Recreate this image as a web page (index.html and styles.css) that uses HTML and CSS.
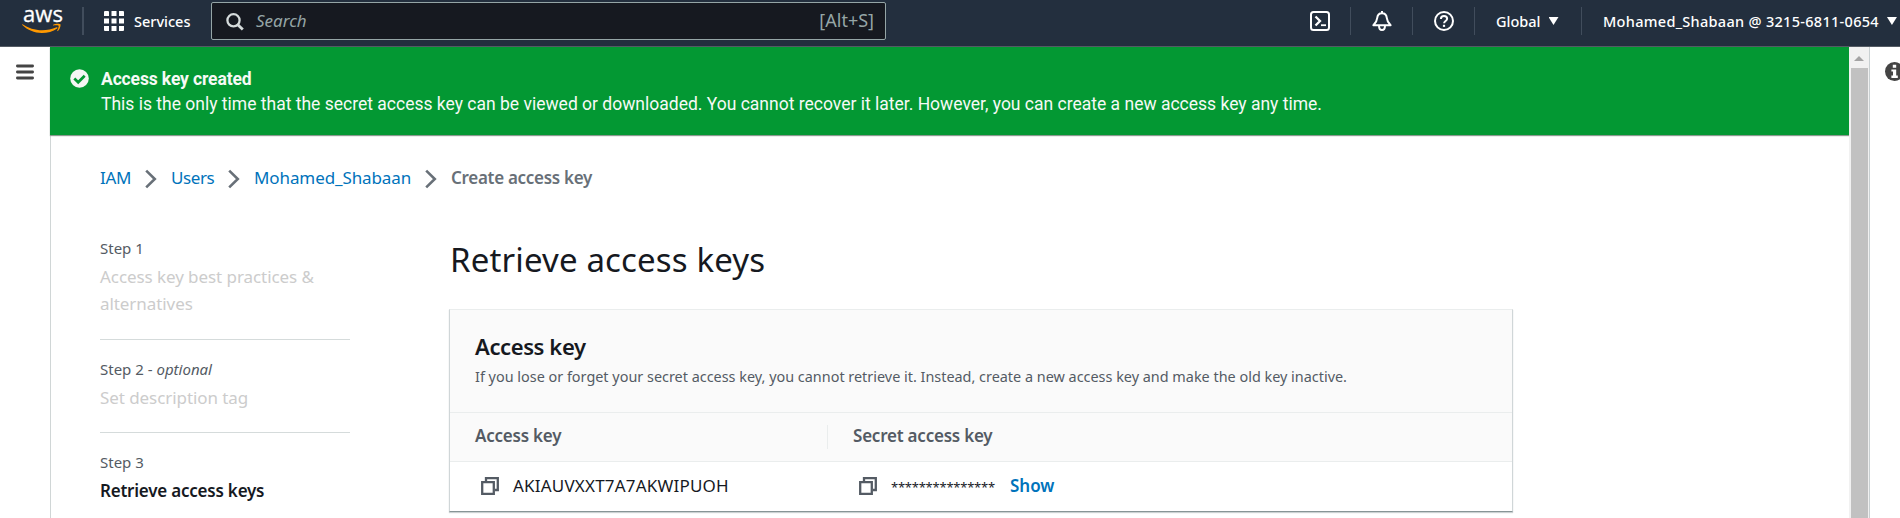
FILE: index.html
```html
<!DOCTYPE html>
<html lang="en">
<head>
<meta charset="utf-8">
<title>Create access key | IAM</title>
<link rel="stylesheet" href="styles.css">
</head>
<body>
<header class="topnav">
  <div class="brand">
    <span class="brand-text">aws</span>
    <svg class="brand-smile" width="40" height="11" viewBox="0 0 40 11"><path d="M.6 1.2C6 5 13 7.2 20 7.2c5.200 0 10-1.100 14.600-3 .8-.3 1.400.6.600 1.200C31 8.500 25.500 10 19.800 10 12.400 10 5.600 7.200.3 2.100c-.4-.5-.1-1.200.3-.9z" fill="#ff9900"/><path d="M36.600 2.800c-.8-.9-4-.6-5.300-.4-.4 0-.5-.3-.1-.6 2.600-1.600 6.600-1.200 7.200-.6.500.6-.1 4.800-2.600 6.800-.4.300-.7.100-.6-.3.600-1.400 1.900-4.100 1.400-4.900z" fill="#ff9900"/></svg>
  </div>
  <div class="rule rule-first"></div>
  <div class="services">
    <svg width="20" height="20" viewBox="0 0 20 20" fill="#fff"><path d="M0 1a1 1 0 0 1 1-1h3a1 1 0 0 1 1 1v4H0zM7.500 0h5v5h-5zM15 0h4a1 1 0 0 1 1 1v4h-5zM0 7.500h5v5H0zM7.500 7.500h5v5h-5zM15 7.500h5v5h-5zM0 15h5v5H1a1 1 0 0 1-1-1zM7.500 15h5v5h-5zM15 15h5v4a1 1 0 0 1-1 1h-4z"/></svg>
    <span class="nav-text">Services</span>
  </div>
  <div class="search">
    <svg width="18" height="18" viewBox="0 0 18 18" fill="none" stroke="#d5dbdb"><circle cx="7.500" cy="7.300" r="6.100" stroke-width="2.300"/><path d="M11.800 11.700l5 4.900" stroke-width="2.800"/></svg>
    <span class="search-hint">Search</span>
    <span class="search-key">[Alt+S]</span>
  </div>
  <div class="tools">
    <svg class="tool" width="20" height="20" viewBox="0 0 20 20" fill="none" stroke="#fff" stroke-width="2"><rect x="1" y="1" width="18" height="18" rx="2.500"/><path d="M5.500 5.500L10 10l-4.500 4.500" stroke-width="2.300"/><path d="M11 14.200h5" stroke-width="1.800"/></svg>
    <div class="rule"></div>
    <svg class="tool" width="20" height="20" viewBox="0 0 20 20" fill="none" stroke="#fff" stroke-width="2" stroke-linejoin="round"><path d="M10 2.200c-3.200 0-4.600 2.300-4.800 4.800-.2 3-1.200 4.600-3.800 7.200h17.200c-2.600-2.600-3.600-4.200-3.800-7.200-.2-2.500-1.600-4.800-4.800-4.800zM10 0v2.500"/><path d="M7 14.500c0 2.700 1.200 4.500 3 4.500s3-1.800 3-4.500"/></svg>
    <div class="rule"></div>
    <svg class="tool" width="20" height="20" viewBox="0 0 20 20" fill="none" stroke="#fff" stroke-width="2"><circle cx="10" cy="10" r="9"/><path d="M6.900 8c0-1.900 1.300-3 3.100-3s3.100 1.100 3.100 2.700c0 2.200-3 2.300-3 4.500"/><path d="M10 13.800v2.100" stroke-width="2.200"/></svg>
    <div class="rule"></div>
    <div class="menu menu-region"><span class="nav-text">Global</span><i class="caret"></i></div>
    <div class="rule"></div>
    <div class="menu menu-account"><span class="nav-text account">Mohamed_Shabaan @ 3215-6811-0654</span><i class="caret"></i></div>
  </div>
</header>
<div class="shell">
  <aside class="rail">
    <svg width="18" height="16" viewBox="0 0 18 16" stroke="#444" stroke-width="2.800" stroke-linecap="round"><path d="M1.400 2h15.200M1.400 8h15.200M1.400 14h15.200"/></svg>
  </aside>
  <main class="content">
    <section class="flash">
      <svg width="19" height="19" viewBox="0 0 19 19"><circle cx="9.500" cy="9.500" r="9.300" fill="#f4f6f4"/><path d="M4.300 9.600l3.900 3.700 6.500-6.500" fill="none" stroke="#039833" stroke-width="2.700"/></svg>
      <div>
        <div class="flash-title">Access key created</div>
        <div class="flash-text">This is the only time that the secret access key can be viewed or downloaded. You cannot recover it later. However, you can create a new access key any time.</div>
      </div>
    </section>
    <nav class="crumbs">
      <a class="crumb-iam">IAM</a>
      <svg class="chev" width="12" height="20" viewBox="0 0 12 20"><path d="M1.200 1.600L9.800 10l-8.600 8.400"/></svg>
      <a class="crumb-users">Users</a>
      <svg class="chev" width="12" height="20" viewBox="0 0 12 20"><path d="M1.200 1.600L9.800 10l-8.600 8.400"/></svg>
      <a class="crumb-user">Mohamed_Shabaan</a>
      <svg class="chev" width="12" height="20" viewBox="0 0 12 20"><path d="M1.200 1.600L9.800 10l-8.600 8.400"/></svg>
      <span class="crumb-current">Create access key</span>
    </nav>
    <div class="wizard">
      <ol class="steps">
        <li class="step"><div class="step-no">Step 1</div><div class="step-name">Access key best practices &amp;<br>alternatives</div></li>
        <li class="step"><div class="step-no">Step 2 - <em>optional</em></div><div class="step-name">Set description tag</div></li>
        <li class="step"><div class="step-no">Step 3</div><div class="step-name step-active">Retrieve access keys</div></li>
      </ol>
      <div class="panel">
        <h1>Retrieve access keys</h1>
        <section class="card">
          <div class="card-head">
            <h2>Access key</h2>
            <p>If you lose or forget your secret access key, you cannot retrieve it. Instead, create a new access key and make the old key inactive.</p>
          </div>
          <div class="row row-head">
            <div class="cell">Access key</div>
            <div class="divider"></div>
            <div class="cell">Secret access key</div>
          </div>
          <div class="row row-body">
            <div class="cell">
              <svg class="copy" width="18" height="18" viewBox="0 0 18 18"><path d="M5 4.500V1.200h11.800V13H14M1.200 5.200h11.600v11.600H1.200z"/></svg>
              <span class="key">AKIAUVXXT7A7AKWIPUOH</span>
            </div>
            <div class="cell">
              <svg class="copy" width="18" height="18" viewBox="0 0 18 18"><path d="M5 4.500V1.200h11.800V13H14M1.200 5.200h11.600v11.600H1.200z"/></svg>
              <span class="stars">***************</span>
              <a class="show">Show</a>
            </div>
          </div>
        </section>
      </div>
    </div>
  </main>
  <div class="scrollbar"><i class="scroll-up"></i><i class="scroll-thumb"></i></div>
  <aside class="info">
    <svg width="19" height="19" viewBox="0 0 19 19"><circle cx="9.500" cy="9.500" r="9.500" fill="#444"/><path d="M7.800 2.800h3.400v3H7.800zM6.400 7.400h4.800v6.200h1.600V16H6.400v-2.400H8V9.600H6.400z" fill="#fff"/></svg>
  </aside>
</div>
</body>
</html>
```
FILE: styles.css
```css
* { box-sizing: border-box; }
body { margin: 0; width: 1900px; height: 518px; overflow: hidden; background: #fff; color: #16191f; font-family: "Noto Sans", "Open Sans", sans-serif; font-size: 17px; }
svg { display: block; flex: none; }
.topnav { display: flex; align-items: flex-start; height: 47px; background: #232f3e; border-bottom: 1px solid #545b64; white-space: nowrap; }
.brand { width: 83px; height: 46px; padding-left: 22px; display: flex; flex-direction: column; }
.brand-text { font: 400 22px/24px "Open Sans", sans-serif; letter-spacing: 0.1px; color: #fff; -webkit-text-stroke: 0.3px #fff; margin-top: 1px; padding-left: 1px; height: 23px; }
.brand-smile { margin-top: -1px; }
.rule { flex: none; width: 1px; height: 28px; margin-top: 7px; background: #414d5c; }
.rule-first { width: 2px; margin-left: -1px; }
.services { display: flex; width: 127px; padding: 11px 0 0 20px; gap: 10px; }
.nav-text { color: #fff; font-size: 14.5px; font-weight: 500; line-height: 20px; }
.account { letter-spacing: 0.3px; }
.search { display: flex; width: 675px; height: 38px; margin-top: 2px; padding: 10px 11px 0 14px; background: #161920; border: 1px solid #95a5a6; border-radius: 2px; color: #95a5a6; line-height: 16px; }
.search-hint { margin-left: 12px; font-style: italic; }
.search-key { margin-left: auto; font-size: 18px; line-height: 15px; }
.tools { display: flex; padding-left: 424px; }
.tool { margin: 11px 20px 0 21px; }
.tool:first-child { margin-left: 0; }
.menu { display: flex; padding-top: 11px; }
.menu-region { width: 106px; padding-left: 21px; }
.menu-account { padding-left: 21px; }
.caret { width: 10px; height: 8px; margin: 6px 0 0 8px; background: #fff; clip-path: polygon(0 0, 100% 0, 50% 100%); }
.shell { display: flex; height: 471px; overflow: hidden; }
.rail { width: 50px; padding: 17px 0 0 16px; }
.content { width: 1799px; border-left: 1px solid #d0d6d6; }
.flash { display: flex; gap: 12px; height: 88px; margin-left: -1px; padding: 22px 0 0 20px; background: #039833; box-shadow: 0 1px 1px #8a9a8f; color: #f6faf6; font-family: Roboto, sans-serif; font-size: 17.5px; line-height: 24px; white-space: nowrap; }
.flash > div { margin-top: -2px; }
.flash-title { font-weight: 700; letter-spacing: -0.13px; height: 25px; }
.crumbs { display: flex; align-items: flex-start; height: 64px; padding: 31px 0 0 49px; color: #0073bb; line-height: 24px; white-space: nowrap; }
.crumb-iam { width: 31px; letter-spacing: -0.3px; }
.crumb-users { width: 43px; letter-spacing: -0.4px; }
.crumb-user { width: 157px; letter-spacing: -0.1px; }
.crumb-current { color: #687078; font-weight: 600; letter-spacing: -0.3px; }
.chev { margin: 3px 14px 0; fill: none; stroke: #687078; stroke-width: 2.6; }
.wizard { display: flex; padding-left: 49px; }
.steps { list-style: none; margin: 0; padding: 37px 0 0; width: 250px; }
.step { border-bottom: 1px solid #d5dbdb; margin-bottom: 17px; padding-bottom: 21.5px; }
.step:last-child { border: 0; }
.step-no { font-size: 15px; line-height: 25px; color: #545b64; }
.step-name { line-height: 27px; color: #ccc; white-space: nowrap; margin-top: 2px; letter-spacing: -0.07px; }
.step-active { color: #16191f; font-weight: 600; letter-spacing: -0.22px; }
.panel { width: 1064px; margin-left: 99px; padding-top: 39px; }
h1 { margin: 0; font-size: 33px; font-weight: 400; line-height: 44px; padding-left: 1px; letter-spacing: 0.15px; }
.card { margin-top: 27px; border: 1px solid #eaeded; border-color: #eaeded #d0d6d8 #879596 #d0d6d8; box-shadow: 0 1px 1px rgba(0, 28, 36, 0.2); }
.card-head { height: 102px; padding: 22px 24px 0 25px; background: #fafafa; }
h2 { margin: 0; font-size: 22px; font-weight: 600; line-height: 28px; letter-spacing: -0.4px; }
p { margin: 5px 0 0; color: #545b64; font-size: 14.42px; line-height: 24px; }
.row { display: flex; border-top: 1px solid #eaeded; }
.row-head { height: 49px; background: #fafafa; color: #545b64; font-weight: 600; letter-spacing: -0.22px; }
.row-body { height: 50px; }
.cell { display: flex; width: 378px; padding: 10.5px 0 0 25px; line-height: 24px; }
.row-head .cell:first-child { width: 377px; }
.row-body .cell { padding-top: 11.5px; }
.divider { width: 1px; height: 24px; margin-top: 12px; background: #eaeded; }
.copy { margin: 3.5px 0 0 6px; fill: none; stroke: #545b64; stroke-width: 2.3; }
.key { margin-left: 14px; letter-spacing: 0.2px; }
.stars { width: 104px; margin: 1px 0 0 14px; font-size: 13px; letter-spacing: -0.24px; }
.show { color: #0073bb; font-weight: 600; margin-left: 15px; }
.scrollbar { width: 21px; background: #f1f1f1; border-right: 1px solid #c9d0d2; }
.scroll-up { display: block; width: 10px; height: 5px; margin: 9px 0 7px 5px; background: #a3a3a3; clip-path: polygon(50% 0, 100% 100%, 0 100%); }
.scroll-thumb { display: block; width: 17px; height: 450px; margin-left: 2px; background: #c1c1c1; }
.info { width: 30px; padding: 15px 0 0 15px; overflow: hidden; }
```
